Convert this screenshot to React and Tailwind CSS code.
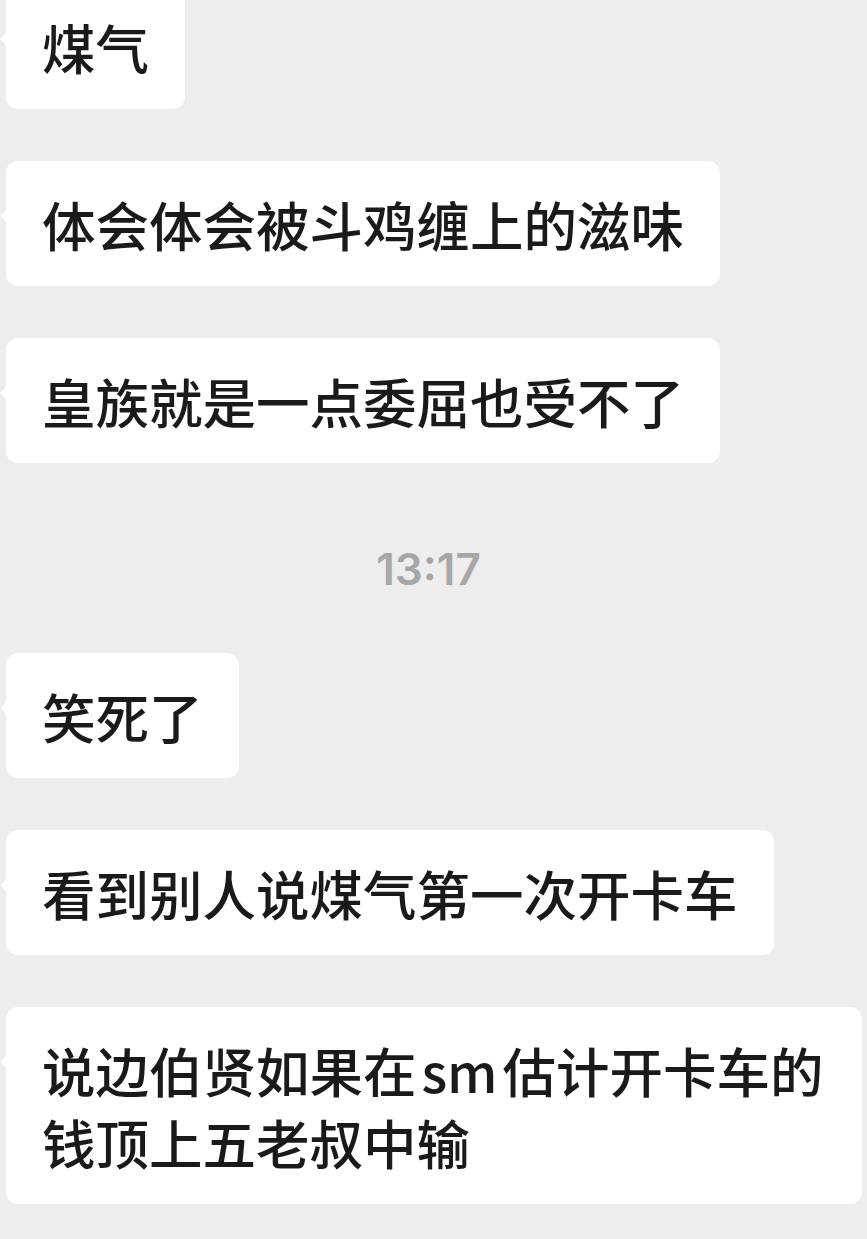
const MESSAGES = [
  { id: 1, text: '煤气' },
  { id: 2, text: '体会体会被斗鸡缠上的滋味' },
  { id: 3, text: '皇族就是一点委屈也受不了' },
  { id: 'time', time: '13:17' },
  { id: 4, text: '笑死了' },
  { id: 5, text: '看到别人说煤气第一次开卡车' },
  {
    id: 6,
    text: (
      <>
        说边伯贤如果在<span className="inline-block w-[86px] text-center">sm</span>估计开卡车的钱顶上五老叔中输
      </>
    ),
  },
]

function Tail() {
  return (
    <svg
      className="absolute left-[-6px] top-[44px]"
      width="7"
      height="22"
      viewBox="0 0 7 22"
    >
      <path
        d="M7 0 C7 4 4 8 1.5 9.8 C0.3 10.6 0.3 11.4 1.5 12.2 C4 14 7 18 7 22 Z"
        fill="#ffffff"
      />
    </svg>
  )
}

function Bubble({ children }) {
  return (
    <div className="pl-[6px] pr-[5px]">
      <div className="relative w-fit max-w-[856px] rounded-[12px] bg-white px-[36px] py-[26.5px] text-[53.5px] font-medium leading-[72px] text-[#1a1a1a]">
        <Tail />
        {children}
      </div>
    </div>
  )
}

export default function App() {
  return (
    <div
      className="min-h-[1239px] overflow-hidden bg-[#ededed]"
      style={{ fontFamily: '"Noto Sans CJK SC", "Noto Sans", sans-serif' }}
    >
      <div className="-mt-[16px] flex flex-col">
        {MESSAGES.map((m, i) => {
          if (m.time) {
            return (
              <div
                key={m.id}
                className="flex h-[190px] items-center justify-center pt-[22px] pr-[10px] font-['Inter',sans-serif] text-[44px] font-semibold leading-none text-[#a6a6a6]"
              >
                {m.time}
              </div>
            )
          }
          const next = MESSAGES[i + 1]
          return (
            <div key={m.id} className={next && !next.time ? 'mb-[52px]' : ''}>
              <Bubble>{m.text}</Bubble>
            </div>
          )
        })}
      </div>
    </div>
  )
}
